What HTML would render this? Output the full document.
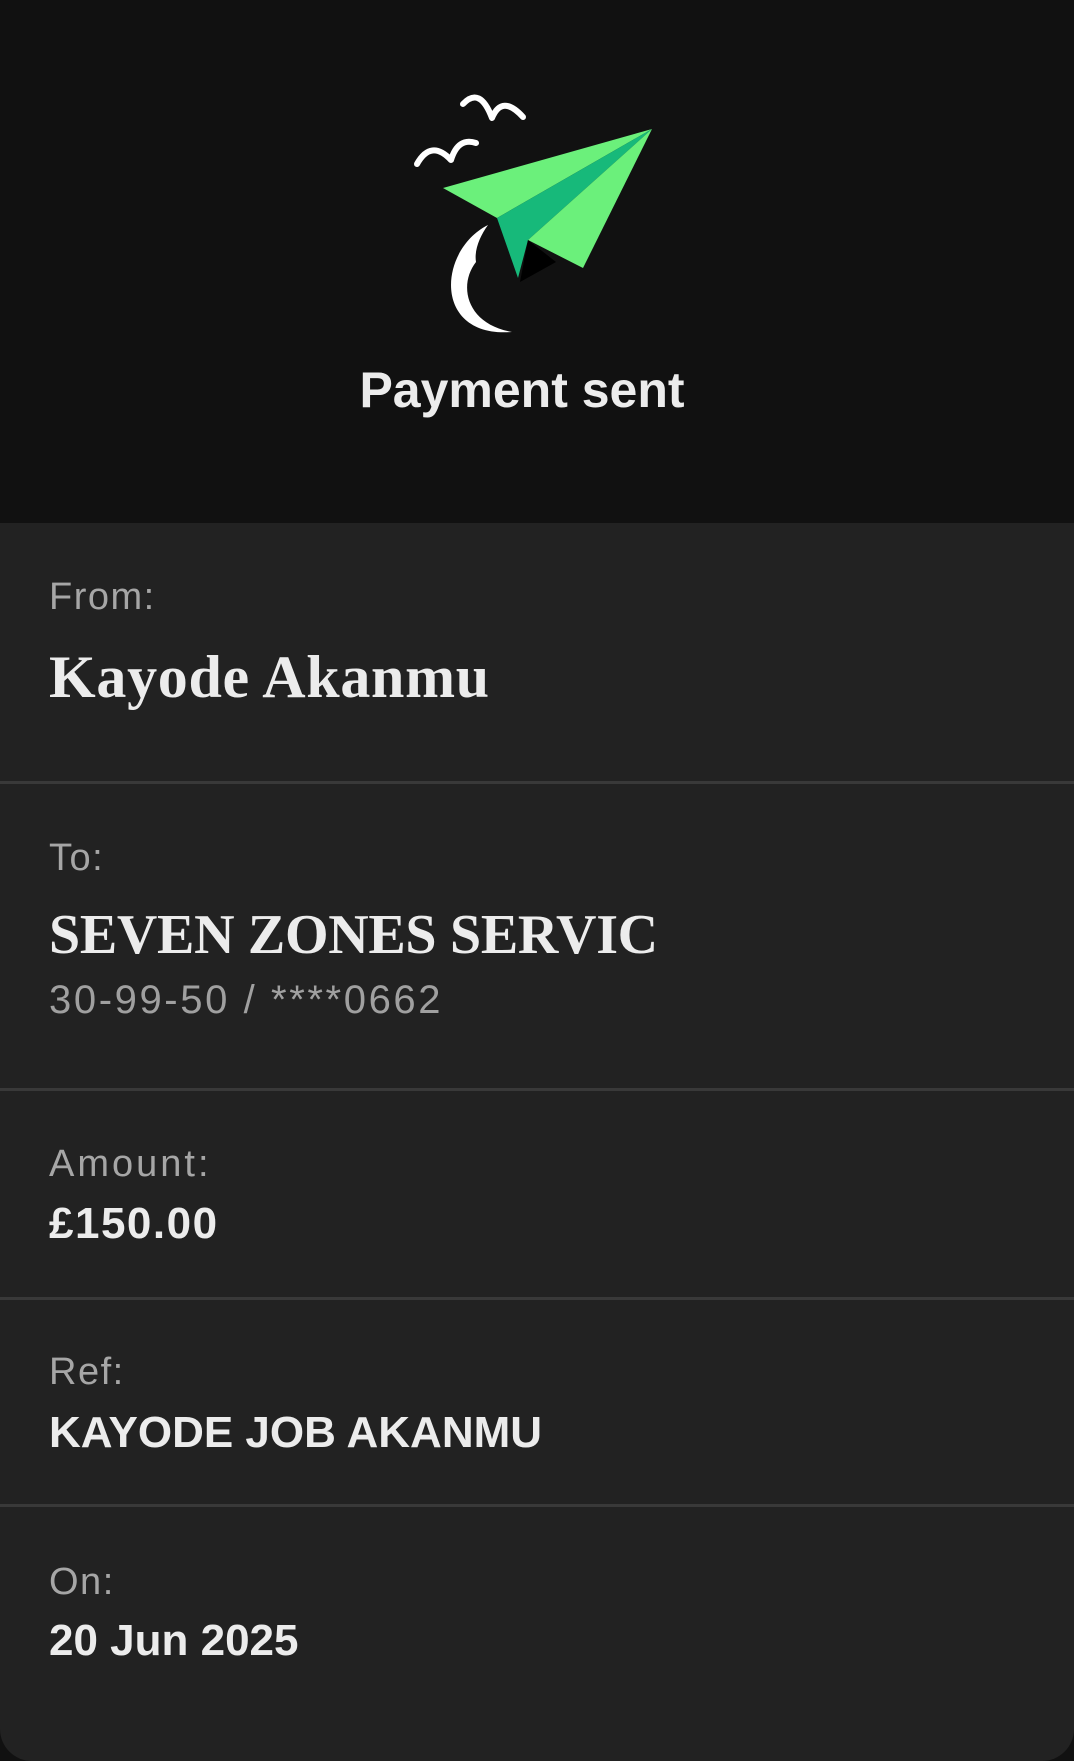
<!DOCTYPE html>
<html><head><meta charset="utf-8"><style>
html,body{margin:0;padding:0;background:#111;}
#p{position:relative;width:1074px;height:1761px;overflow:hidden;background:#111;font-family:"Liberation Sans",sans-serif;}
#card{position:absolute;left:0;top:523px;width:1074px;height:1238px;background:#222;border-radius:0 0 32px 32px;}
.t{position:absolute;left:49px;white-space:nowrap;line-height:1;}
.lab{font-size:38px;color:#a6a6a6;letter-spacing:1.5px;}
.val{font-size:44px;font-weight:bold;color:#ececec;}
.ser{font-family:"Liberation Serif",serif;font-weight:bold;color:#ececec;}
.hr{position:absolute;left:0;width:1074px;height:3px;background:#393939;}
</style></head><body><div id="p">
<svg width="1074" height="523" style="position:absolute;left:0;top:0">
<polygon points="443,188 652,129 497,218" fill="#6bf07b"/>
<polygon points="497,218 652,129 528,240 518,278" fill="#17b97a"/>
<polygon points="528,240 652,129 583,268" fill="#6bf07b"/>
<polygon points="528,240 520,282 556,262" fill="#000"/>
<path d="M463,104 Q480,86 492,118 Q502,94 523,117" fill="none" stroke="#fff" stroke-width="6" stroke-linecap="round" stroke-linejoin="round"/>
<path d="M417,164 Q431,139 451,160 Q458,137 476,143" fill="none" stroke="#fff" stroke-width="6" stroke-linecap="round" stroke-linejoin="round"/>
<path d="M488,225 C438,250 432,338 512,332 C466,324 458,285 476,262 C474,250 480,236 488,225 Z" fill="#fff"/>
<text x="522" y="407" text-anchor="middle" font-family="Liberation Sans, sans-serif" font-weight="bold" font-size="50" fill="#ececec">Payment sent</text>
</svg>
<div id="card"></div>
<div class="t lab" style="top:578px">From:</div>
<div class="t ser" style="top:647px;font-size:60px;letter-spacing:0.7px">Kayode Akanmu</div>
<div class="hr" style="top:781px"></div>
<div class="t lab" style="top:839px">To:</div>
<div class="t ser" style="top:907px;font-size:56px;letter-spacing:-0.3px">SEVEN ZONES SERVIC</div>
<div class="t" style="top:980px;font-size:40px;color:#a0a0a0;letter-spacing:2.6px">30-99-50 / ****0662</div>
<div class="hr" style="top:1088px"></div>
<div class="t lab" style="top:1145px;letter-spacing:3px">Amount:</div>
<div class="t val" style="top:1202px;letter-spacing:1.5px">£150.00</div>
<div class="hr" style="top:1297px"></div>
<div class="t lab" style="top:1353px">Ref:</div>
<div class="t val" style="top:1411px">KAYODE JOB AKANMU</div>
<div class="hr" style="top:1504px"></div>
<div class="t lab" style="top:1563px">On:</div>
<div class="t val" style="top:1619px">20 Jun 2025</div>
</div></body></html>
